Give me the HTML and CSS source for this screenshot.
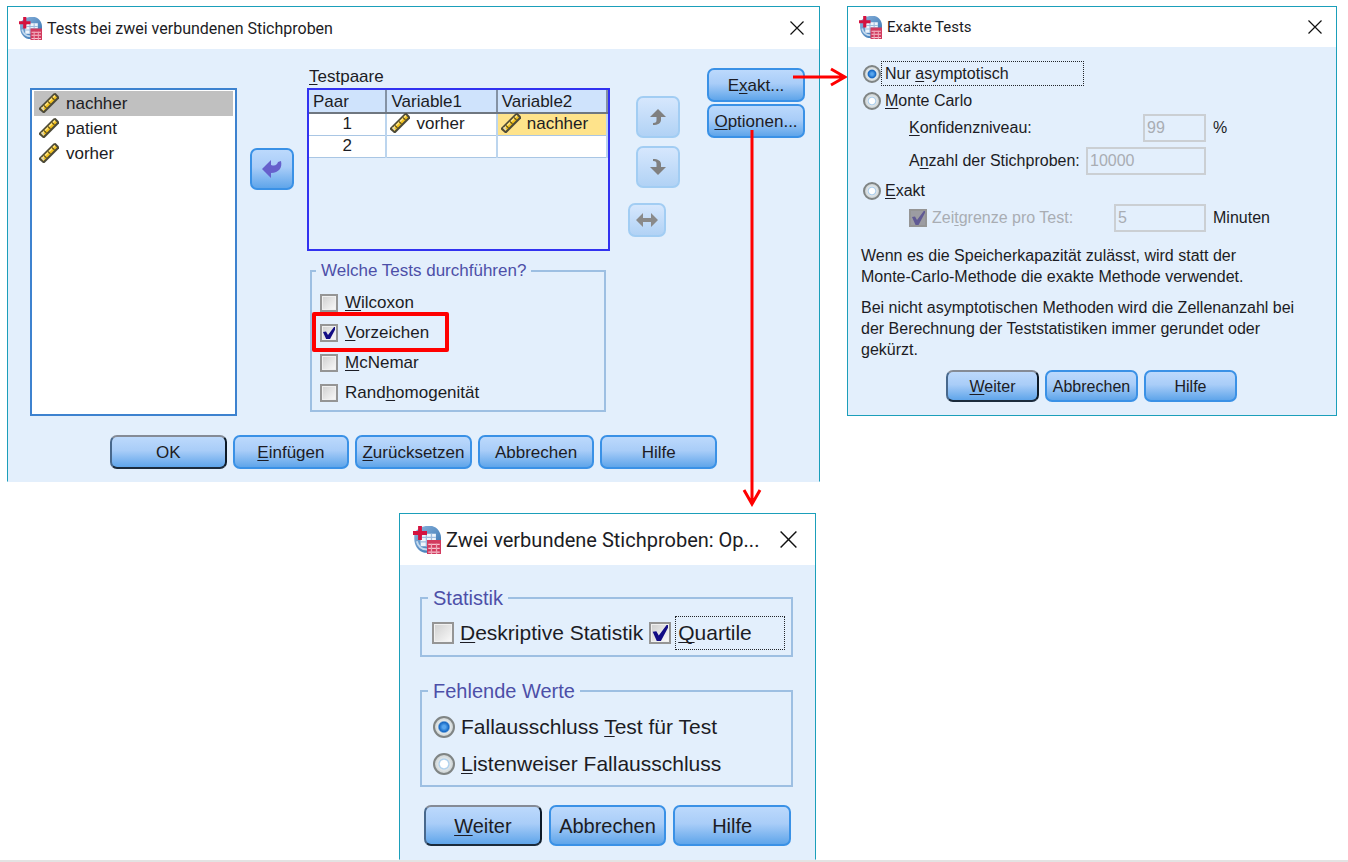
FILE: index.html
```html
<!DOCTYPE html>
<html lang="de">
<head>
<meta charset="utf-8">
<title>Tests bei zwei verbundenen Stichproben</title>
<link rel="stylesheet" href="styles.css">
</head>
<body>
<svg class="symbols" width="0" height="0" aria-hidden="true">
  <defs>
    <linearGradient id="globe" x1="0" y1="0" x2="1" y2="1">
      <stop offset="0" stop-color="#8fb6de"/><stop offset="1" stop-color="#2f6fae"/>
    </linearGradient>
    <symbol id="app" viewBox="0 0 22 22">
      <path d="M10 0H15C19 1 22 5 22 9V19H17L14 21H9C4 20 1 15 1 10V5L6 1Z" fill="url(#globe)"/>
      <path d="M8 6H18V11H11V16H6V9Z" fill="#eef4fb"/>
      <path d="M7 9H18M6 12.500H11M10.500 6V16M14.500 6V11" stroke="#9dbbdd" stroke-width="1"/>
      <path d="M3 12C4 16 7 18.500 11 18.500" stroke="#c4daef" stroke-width="1.500" fill="none"/>
      <path d="M4 0H7V4H11V7H7V11H4V7H0V4H4Z" fill="#d4123f"/>
      <rect x="11" y="11" width="11" height="11" fill="#d23a5e"/>
      <path d="M12 14.500H21M12 17.500H21M12 20.500H21" stroke="#f6c4d0" stroke-width="1"/>
      <path d="M14.500 14V22M18.500 14V22" stroke="#eea4b6" stroke-width="1"/>
    </symbol>
    <symbol id="ruler" viewBox="0 0 22 22">
      <path d="M1 15L15.500 0.500L17.500 0L21 3.500V5.500L6.500 20H5L1 16.500Z" fill="#4d4a38"/>
      <path d="M3 15.500L16.500 2L19 4.500L5.500 18Z" fill="#f3c21c"/>
      <path d="M4 14.500L16.500 2L17.500 3L5 15.500Z" fill="#ffe588"/>
      <path d="M6 12.500L8.500 15M10 8.500L12.500 11M14 4.500L16.500 7" stroke="#6b5a1a" stroke-width="1.300"/>
      <path d="M3 15L5.500 17.500L6.500 16.500L4 14Z" fill="#d8d8d0"/>
    </symbol>
    <symbol id="close" viewBox="0 0 14 14">
      <path d="M0.500 0.500L13.500 13.500M13.500 0.500L0.500 13.500" stroke="#111" stroke-width="1.200" fill="none"/>
    </symbol>
  </defs>
</svg>

<main class="desktop">
  <section class="dialog dialog-main" aria-labelledby="t1">
    <header class="titlebar">
      <svg class="app-icon"><use href="#app"/></svg>
      <h1 id="t1">Tests bei zwei verbundenen Stichproben</h1>
      <button class="close" aria-label="Schließen"><svg><use href="#close"/></svg></button>
    </header>
    <div class="main-body">
      <ul class="var-list">
        <li class="selected"><svg class="ruler"><use href="#ruler"/></svg>nachher</li>
        <li><svg class="ruler"><use href="#ruler"/></svg>patient</li>
        <li><svg class="ruler"><use href="#ruler"/></svg>vorher</li>
      </ul>
      <button class="icon-btn transfer" aria-label="Zurück übertragen">
        <svg width="22" height="20" viewBox="0 0 22 20"><path d="M1 10L10 1V6C14 7.500 16 6 17 3L20 2C21.500 9 18 13.500 10 14V19Z" fill="#6660cc"/></svg>
      </button>
      <div class="pairs">
        <span class="pairs-label" id="pl"><u>T</u>estpaare</span>
        <div class="pair-box">
          <table class="pair-table" aria-labelledby="pl">
            <thead><tr><th>Paar</th><th>Variable1</th><th>Variable2</th></tr></thead>
            <tbody>
              <tr><td class="num">1</td><td><span class="var"><svg class="ruler"><use href="#ruler"/></svg>vorher</span></td><td class="active"><span class="var"><svg class="ruler"><use href="#ruler"/></svg>nachher</span></td></tr>
              <tr><td class="num">2</td><td></td><td></td></tr>
            </tbody>
          </table>
        </div>
        <fieldset class="group tests">
          <legend>Welche Tests durchführen?</legend>
          <label class="option"><input type="checkbox"><span><u>W</u>ilcoxon</span></label>
          <label class="option marked"><input type="checkbox" checked><span><u>V</u>orzeichen</span></label>
          <label class="option"><input type="checkbox"><span><u>M</u>cNemar</span></label>
          <label class="option"><input type="checkbox"><span>Rand<u>h</u>omogenität</span></label>
        </fieldset>
      </div>
      <div class="movers">
        <button class="icon-btn off" disabled aria-label="Nach oben">
          <svg width="18" height="18" viewBox="0 0 18 18"><path d="M9 1L17 9H12V12C12 15 9 17 4 17V15C7 15 7.500 14 7.500 12V9H1Z" fill="#808080"/></svg>
        </button>
        <button class="icon-btn off" disabled aria-label="Nach unten">
          <svg width="18" height="18" viewBox="0 0 18 18"><path d="M9 17L17 9H12V6C12 3 9 1 4 1V3C7 3 7.500 4 7.500 6V9H1Z" fill="#808080"/></svg>
        </button>
        <button class="icon-btn off swap" disabled aria-label="Tauschen">
          <svg width="22" height="14" viewBox="0 0 22 14"><path d="M0 7L7 0V5H15V0L22 7L15 14V9H7V14Z" fill="#8a8a8a"/></svg>
        </button>
      </div>
      <div class="side">
        <div class="anchor">
          <button class="btn">E<u>x</u>akt...</button>
          <svg class="arrow arrow-right" width="54" height="20" viewBox="0 0 54 20"><path d="M0 10H50M38 2L52 10L38 18" fill="none" stroke="#f00" stroke-width="3"/></svg>
        </div>
        <div class="anchor">
          <button class="btn"><u>O</u>ptionen...</button>
          <svg class="arrow arrow-down" width="20" height="377" viewBox="0 0 20 377"><path d="M10 0V373M2 360L10 374L18 360" fill="none" stroke="#f00" stroke-width="3"/></svg>
        </div>
      </div>
    </div>
    <footer class="actions">
      <button class="btn default">OK</button>
      <button class="btn"><u>E</u>infügen</button>
      <button class="btn"><u>Z</u>urücksetzen</button>
      <button class="btn">Abbrechen</button>
      <button class="btn">Hilfe</button>
    </footer>
  </section>

  <section class="dialog dialog-exact" aria-labelledby="t2">
    <header class="titlebar">
      <svg class="app-icon"><use href="#app"/></svg>
      <h2 id="t2">Exakte Tests</h2>
      <button class="close" aria-label="Schließen"><svg><use href="#close"/></svg></button>
    </header>
    <div class="exact-body">
      <label class="option"><input type="radio" name="method" checked><span class="focus">Nur <u>a</u>symptotisch</span></label>
      <label class="option"><input type="radio" name="method"><span><u>M</u>onte Carlo</span></label>
      <div class="field">
        <label for="conf"><u>K</u>onfidenzniveau:</label>
        <input class="text short" id="conf" type="text" value="99" disabled>
        <span class="unit">%</span>
      </div>
      <div class="field last">
        <label for="samples">A<u>n</u>zahl der Stichproben:</label>
        <input class="text long" id="samples" type="text" value="10000" disabled>
      </div>
      <label class="option"><input type="radio" name="method"><span><u>E</u>xakt</span></label>
      <div class="field">
        <label class="muted"><input type="checkbox" checked disabled><span>Zei<u>t</u>grenze pro Test:</span></label>
        <input class="text medium" aria-label="Zeitgrenze" type="text" value="5" disabled>
        <span class="unit">Minuten</span>
      </div>
      <p>Wenn es die Speicherkapazität zulässt, wird statt der<br>Monte-Carlo-Methode die exakte Methode verwendet.</p>
      <p>Bei nicht asymptotischen Methoden wird die Zellenanzahl bei<br>der Berechnung der Teststatistiken immer gerundet oder<br>gekürzt.</p>
    </div>
    <footer class="actions">
      <button class="btn default"><u>W</u>eiter</button>
      <button class="btn">Abbrechen</button>
      <button class="btn">Hilfe</button>
    </footer>
  </section>

  <section class="dialog dialog-options" aria-labelledby="t3">
    <header class="titlebar">
      <svg class="app-icon"><use href="#app"/></svg>
      <h2 id="t3">Zwei verbundene Stichproben: Op...</h2>
      <button class="close" aria-label="Schließen"><svg><use href="#close"/></svg></button>
    </header>
    <div class="options-body">
      <fieldset class="group stats">
        <legend>Statistik</legend>
        <label class="option"><input type="checkbox"><span><u>D</u>eskriptive Statistik</span></label>
        <label class="option"><input type="checkbox" checked><span class="focus"><u>Q</u>uartile</span></label>
      </fieldset>
      <fieldset class="group missing">
        <legend>Fehlende Werte</legend>
        <label class="option"><input type="radio" name="missing" checked><span>Fallausschluss <u>T</u>est für Test</span></label>
        <label class="option"><input type="radio" name="missing"><span><u>L</u>istenweiser Fallausschluss</span></label>
      </fieldset>
    </div>
    <footer class="actions">
      <button class="btn default"><u>W</u>eiter</button>
      <button class="btn">Abbrechen</button>
      <button class="btn">Hilfe</button>
    </footer>
  </section>
</main>
</body>
</html>
```

FILE: styles.css
```css
* { box-sizing: border-box; }

body {
  margin: 0;
  min-height: 100vh;
  background: #fff;
  color: #1c1c24;
  font-family: "Liberation Sans", Arial, sans-serif;
  border-bottom: 2px solid #e3e3e3;
}

button, input { font: inherit; color: inherit; margin: 0; }
u { text-underline-offset: 2px; text-decoration-thickness: 1px; text-decoration-skip-ink: none; }
.symbols { position: absolute; }

.desktop {
  display: grid;
  grid-template-columns: minmax(0, 813fr) minmax(0, 490fr);
  column-gap: 27px;
  row-gap: 31px;
  align-items: start;
  padding: 6px 11px 0 7px;
}

.dialog {
  background: #e3effc;
  border: 1px solid #1b9fba;
}

.dialog-main { font-size: 17px; border-bottom-color: #e3effc; }
.dialog-exact { font-size: 16px; }
.dialog-options {
  grid-column: 1;
  justify-self: end;
  width: 417px;
  margin-right: 4px;
  font-size: 20px;
  border-bottom-color: #e3effc;
}

/* Title bars */
.titlebar {
  display: flex;
  align-items: center;
  height: 42px;
  padding: 0 15px 0 11px;
  background: #fff;
}
.titlebar h1, .titlebar h2 {
  flex: 1;
  margin: 0 0 0 5px;
  font-family: Roboto, "Open Sans", sans-serif;
  font-size: 16px;
  font-weight: 400;
  white-space: nowrap;
}
.app-icon { width: 23px; height: 23px; }
.close { display: flex; padding: 0; border: 0; background: none; }
.close svg { width: 14px; height: 14px; }
.dialog-exact .titlebar { height: 40px; padding-right: 14px; }
.dialog-exact .titlebar h2 { font-size: 15px; }
.dialog-options .titlebar { height: 51px; padding: 0 18px 0 13px; }
.dialog-options .titlebar h2 { font-size: 20px; }
.dialog-options .app-icon { width: 28px; height: 28px; }
.dialog-options .close svg { width: 17px; height: 17px; }

/* Buttons */
.btn {
  width: 100%;
  height: 34px;
  padding: 2px 0 0;
  border: 2px solid #3a91e6;
  border-radius: 7px;
  background: linear-gradient(#bcd9fc, #a9cdf8 45%, #5fa5ea);
  white-space: nowrap;
}
.btn.default { border-color: #858b96 #0d1a28 #1b2b3c #48688c; }
.actions { display: flex; }
.actions .btn { flex: 1; }

/* Check boxes and radio buttons */
input[type="checkbox"], input[type="radio"] {
  appearance: none;
  flex: none;
  width: 18px;
  height: 18px;
}
input[type="checkbox"] {
  border: 2px solid #959595;
  background: linear-gradient(135deg, #cfcfcf, #fafafa);
  box-shadow: inset 0 0 0 1px #f0f0f0;
}
input[type="checkbox"]:checked {
  background: url("data:image/svg+xml,%3Csvg xmlns='http://www.w3.org/2000/svg' viewBox='0 0 18 18'%3E%3Cpath d='M3 8L6 7.500L8 11L15.500 1H17.500L9 17H7Z' fill='%23120c84'/%3E%3C/svg%3E") border-box center / 100% 100% no-repeat, linear-gradient(135deg, #cfcfcf, #fafafa);
}
input[type="checkbox"]:disabled {
  background-color: #9c9ca2;
  background-image: url("data:image/svg+xml,%3Csvg xmlns='http://www.w3.org/2000/svg' viewBox='0 0 18 18'%3E%3Cpath d='M3 8L6 7.500L8 11L15.500 1H17.500L9 17H7Z' fill='%23605a94'/%3E%3C/svg%3E");
  box-shadow: none;
}
input[type="radio"] {
  border: 2px solid #7f8484;
  border-radius: 50%;
  background: radial-gradient(circle, #fff 0 28%, #a9cdec 38%, #dfe5e8 48%, #cfd4d4 70%);
}
input[type="radio"]:checked {
  background: radial-gradient(circle, #58a6ee 0 12%, #1568c4 38%, #e4e9ea 50%, #cfd4d4 70%);
}

.option { display: flex; align-items: center; }
.focus { border: 1px dotted #22252a; }

/* Group boxes */
.group {
  min-width: 0;
  margin: 0;
  padding: 0;
  border: 2px solid #9dbfe2;
}
.group legend {
  margin-left: 4px;
  padding: 0 5px;
  color: #4d4fa8;
  line-height: 20px;
}

/* Main dialog */
.main-body {
  display: grid;
  grid-template-columns: minmax(0, 207fr) 44px minmax(0, 303fr) 57px 112px;
  column-gap: 13px;
  padding: 19px 14px 0 22px;
}
.var-list {
  height: 328px;
  margin: 20px 0 0;
  padding: 1px 2px;
  border: 2px solid #3d82cf;
  background: #fff;
  list-style: none;
}
.var-list li {
  display: flex;
  align-items: center;
  gap: 6px;
  height: 25px;
  padding-left: 4px;
}
.var-list .selected { background: #c0c0c0; }
.ruler { flex: none; width: 22px; height: 22px; }

.icon-btn {
  display: flex;
  align-items: center;
  justify-content: center;
  width: 44px;
  height: 42px;
  padding: 0;
  border: 2px solid #3a91e6;
  border-radius: 7px;
  background: linear-gradient(#bcd9fc, #a9cdf8 45%, #5fa5ea);
}
.icon-btn.off {
  border-color: #a2cdf3;
  background: linear-gradient(#d6e7fd, #b1d2f5);
}
.transfer { margin-top: 80px; }
.pairs-label { display: block; height: 20px; padding-left: 2px; line-height: 17px; }
.pair-box {
  height: 163px;
  border: 2px solid #3232f0;
}
.pair-table {
  width: 100%;
  border-collapse: collapse;
  table-layout: fixed;
  background: #fff;
}
.pair-table th {
  height: 23px;
  padding: 1px 4px 0;
  border-right: 2px solid #8492a4;
  border-bottom: 2px solid #6f7780;
  background: #cfe3fc;
  font-weight: 400;
  line-height: 20px;
  text-align: left;
}
.pair-table th:first-child { width: 26%; }
.pair-table td {
  height: 22px;
  padding: 0;
  border-right: 2px solid #bcd5ee;
  border-bottom: 1px solid #a9c6e4;
  line-height: 20px;
}
.pair-table .num { text-align: center; }
.pair-table .active { background: #fee38b; }
.var { display: flex; align-items: center; gap: 5px; height: 20px; padding-left: 2px; }

.tests { margin: 10px 4px 0 3px; padding: 7px 0 2px; }
.tests .option {
  position: relative;
  width: fit-content;
  height: 30px;
  margin-left: 8px;
  gap: 7px;
}
.marked::after {
  content: "";
  position: absolute;
  inset: -6px -20px -4px -8px;
  border: 4px solid #f00;
  border-radius: 2px;
}

.movers {
  display: flex;
  flex-direction: column;
  align-items: flex-end;
  gap: 8px;
  padding-top: 28px;
}
.movers .swap { width: 38px; height: 34px; margin: 7px 14px 0 0; }
.side { display: flex; flex-direction: column; gap: 2px; padding-left: 14px; }
.anchor { position: relative; display: flex; }
.arrow { position: absolute; z-index: 2; pointer-events: none; }
.arrow-right { left: 86px; top: -1px; }
.arrow-down { left: 35px; top: 26px; }

.dialog-main .actions { gap: 6px; padding: 19px 102px 12px; }

/* Exact tests dialog */
.exact-body { padding: 13px 16px 0 13px; }
.exact-body .option { height: 27px; width: 223px; }
.exact-body .option input { margin-left: 2px; }
.exact-body .option span { padding-left: 4px; line-height: 23px; }
.exact-body .option .focus { flex: 1; padding-left: 3px; }
.field {
  display: grid;
  grid-template-columns: 1fr auto 114px;
  align-items: center;
  height: 28px;
  margin-bottom: 5px;
  padding-left: 48px;
}
.field.last { margin-bottom: 2px; }
.field label { white-space: nowrap; }
.text {
  height: 28px;
  padding: 0 2px;
  border: 2px solid #cbcfd3;
  border-radius: 0;
  background: transparent;
  color: #a9adb3;
}
.short { width: 63px; }
.medium { width: 92px; }
.long { width: 120px; }
.unit { padding-left: 7px; }
.muted { display: flex; align-items: center; gap: 5px; color: #a9adb3; }
.exact-body p { margin: 0 0 10px; line-height: 21px; }
.exact-body .field + p { margin-top: 13px; }
.dialog-exact .actions { gap: 6px; padding: 0 99px 13px 98px; }
.dialog-exact .btn { height: 32px; }

/* Options dialog */
.options-body { padding: 21px 22px 0 20px; }
.options-body legend { margin-left: 6px; line-height: 24px; }
.options-body input { width: 22px; height: 22px; }
.options-body .option { font-size: 21px; white-space: nowrap; }
.stats { display: flex; align-items: center; gap: 6px; padding: 6px 6px 5px 0; }
.stats .option { margin-left: 10px; gap: 6px; }
.stats .option:last-child { flex: 1; gap: 4px; margin-left: 0; }
.stats .focus { flex: 1; padding-left: 2px; line-height: 32px; }
.missing { margin-top: 22px; padding: 5px 0 3px; }
.missing .option { height: 37px; margin-left: 11px; gap: 6px; }
.dialog-options .actions { gap: 7px; padding: 18px 24px 13px; }
.dialog-options .btn { height: 41px; }
```
